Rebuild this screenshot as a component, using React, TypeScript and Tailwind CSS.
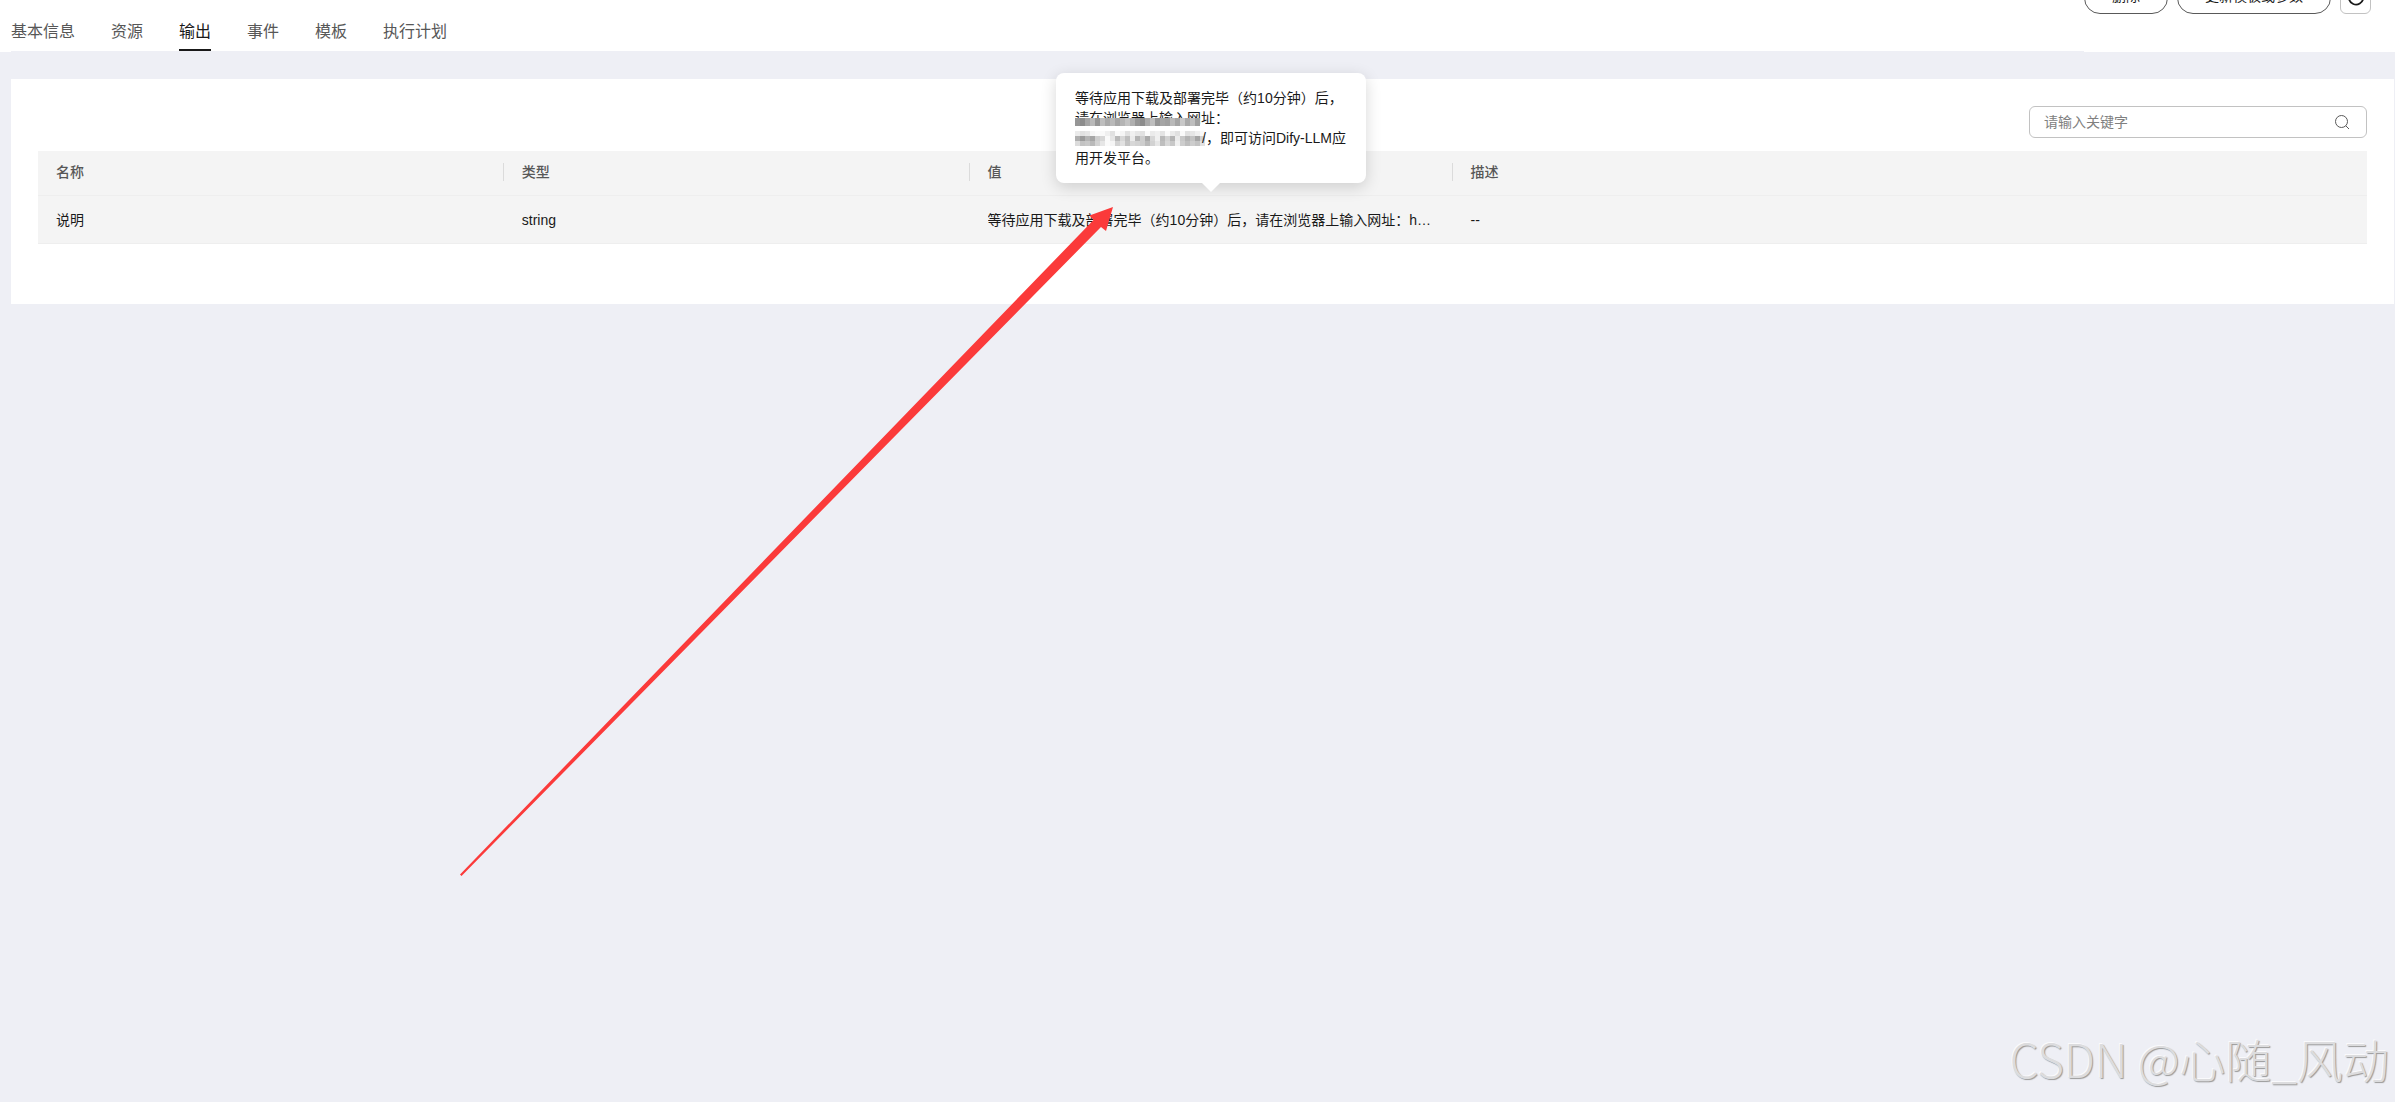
import React from 'react';

const tabs = ['基本信息', '资源', '输出', '事件', '模板', '执行计划'];

const upperCells = [150, 140, 165, 185, 150, 190, 170, 185, 165, 180, 195, 175, 150, 140, 170, 190, 150, 165, 160, 185, 165, 200, 170, 190, 160];

const lowerCells = [
  [235, 225, 230, 245, 250, 250, 240, 225, 250, 245, 225, 240, 230, 225, 250, 235, 240, 228, 250, 235, 225, 250, 225, 230, 240, 250],
  [175, 155, 180, 165, 205, 215, 250, 230, 185, 215, 190, 235, 180, 205, 170, 215, 240, 185, 210, 180, 235, 200, 180, 195, 165, 210],
  [220, 195, 200, 185, 210, 230, 250, 245, 210, 225, 195, 215, 210, 205, 185, 210, 230, 190, 215, 200, 240, 205, 190, 205, 195, 225],
];

function gray(v: number) {
  return `rgb(${v},${v},${v})`;
}

function Mosaic({ rows, className }: { rows: number[][]; className: string }) {
  const w = rows[0].length * 5;
  const h = rows.length * 5;
  return (
    <svg className={className} width={w} height={h} viewBox={`0 0 ${w} ${h}`} preserveAspectRatio="none" shapeRendering="crispEdges" aria-hidden="true">
      {rows.map((row, y) =>
        row.map((v, x) => <rect key={`${x}-${y}`} x={x * 5} y={y * 5} width="5" height="5" fill={gray(v)} />),
      )}
    </svg>
  );
}

function HeaderCell({ label, last }: { label: string; last?: boolean }) {
  return (
    <th scope="col" className="h-[45px] border-b border-[#eeeeee] p-0 text-left font-medium text-[#575757]">
      <div className={last ? 'mb-0.5 px-[18px] leading-[18px]' : 'mb-0.5 border-r border-[#dbdbdb] px-[18px] leading-[18px]'}>{label}</div>
    </th>
  );
}

function Tooltip() {
  return (
    <div role="tooltip" className="absolute bottom-full left-1/2 mb-[13px] h-[110px] w-[310px] -translate-x-1/2 rounded-lg bg-white px-[19px] py-[15px] leading-5 whitespace-nowrap shadow-[0_4px_16px_rgba(0,0,0,0.16)]">
      <p>等待应用下载及部署完毕（约10分钟）后，</p>
      <p className="relative">
        请在浏览器上输入网址：
        <Mosaic rows={[upperCells]} className="absolute top-2.5 left-0 h-2" />
      </p>
      <p className="flex items-center">
        <Mosaic rows={lowerCells} className="mr-px shrink-0" />
        <span className="-ml-1">/，即可访问Dify-LLM应</span>
      </p>
      <p>用开发平台。</p>
      <svg className="absolute top-full left-1/2 -translate-x-1/2" width="18" height="9" viewBox="0 0 18 9" aria-hidden="true">
        <path d="M0 0H18L9 9Z" fill="#fff" />
      </svg>
    </div>
  );
}

export default function App() {
  return (
    <div className="relative min-h-screen overflow-hidden bg-[#eeeff5] font-['Liberation_Sans','Noto_Sans_CJK_SC',sans-serif] text-sm text-[#191919]">
      <header className="flex h-[52px] justify-between bg-white pl-[11px]">
        <nav className="flex flex-1 items-end gap-9 border-b border-[#eeeff5]">
          {tabs.map((tab) => (
            <a
              key={tab}
              href="#"
              aria-current={tab === '输出' ? 'page' : undefined}
              className={
                tab === '输出'
                  ? 'border-b-2 border-[#191919] pb-[5px] text-base leading-6'
                  : 'border-b-2 border-transparent pb-[5px] text-base leading-6 text-[#575757]'
              }
            >
              {tab}
            </a>
          ))}
        </nav>
        <div className="-mt-[18px] mr-6 flex h-8 gap-[9px]">
          <button className="rounded-full border border-[#595959] px-[27px] pb-1 leading-[26px]">删除</button>
          <button className="rounded-full border border-[#595959] px-[27px] pb-1 leading-[26px]">更新模板或参数</button>
          <button aria-label="刷新" className="flex w-[31px] items-center justify-center rounded-md border border-[#c2c2c2]">
            <svg width="18" height="18" viewBox="0 0 18 18" fill="none" stroke="#191919" strokeWidth="1.8" aria-hidden="true">
              <path d="M15 4A7.300 7.300 0 1 0 16.300 9M15.500 1v3.500H12" />
            </svg>
          </button>
        </div>
      </header>

      <main className="mt-[27px] mr-px ml-[11px] bg-white px-[27px] pt-[27px] pb-[60px]">
        <label className="ml-auto flex h-8 w-[338px] items-center rounded-md border border-[#c2c2c2] pr-4 pl-3.5">
          <input type="text" aria-label="请输入关键字" placeholder="请输入关键字" className="min-w-0 flex-1 outline-none placeholder:text-[#808080]" />
          <svg width="16" height="16" viewBox="0 0 16 16" fill="none" stroke="#595959" aria-hidden="true">
            <circle cx="7.5" cy="7.5" r="6" />
            <path d="M11.8 11.8L15 15" />
          </svg>
        </label>

        <table className="mt-[13px] w-full table-fixed border-separate border-spacing-0 bg-[#f4f4f4]">
          <colgroup>
            <col className="w-[20%]" />
            <col className="w-[20%]" />
            <col className="w-[483px]" />
            <col />
          </colgroup>
          <thead>
            <tr>
              <HeaderCell label="名称" />
              <HeaderCell label="类型" />
              <HeaderCell label="值" />
              <HeaderCell label="描述" last />
            </tr>
          </thead>
          <tbody>
            <tr>
              <td className="h-12 border-b border-[#eeeeee] px-[18px] py-0">说明</td>
              <td className="h-12 border-b border-[#eeeeee] px-[18px] py-0">string</td>
              <td className="relative h-12 border-b border-[#eeeeee] px-[18px] py-0">
                <div className="truncate">等待应用下载及部署完毕（约10分钟）后，请在浏览器上输入网址：http://</div>
                <Tooltip />
              </td>
              <td className="h-12 border-b border-[#eeeeee] px-[18px] py-0">--</td>
            </tr>
          </tbody>
        </table>
      </main>

      <svg className="pointer-events-none absolute top-[207px] left-[460px]" width="653" height="670" viewBox="460 207 653 670" aria-hidden="true">
        <path d="M460 874.500L1093.500 220L1089.500 215.500L1113 207L1106 231L1101 227L461.500 876Z" fill="#fb3a3a" />
      </svg>

      <div className="absolute right-1.5 bottom-1.5 font-['Noto_Sans_CJK_SC',sans-serif] text-[46px] leading-[76px] font-light whitespace-nowrap text-[#dcdcde] [text-shadow:1px_1px_1px_#999,-1px_-1px_0_#fafafc]">
        CSDN @心随_风动
      </div>
    </div>
  );
}
